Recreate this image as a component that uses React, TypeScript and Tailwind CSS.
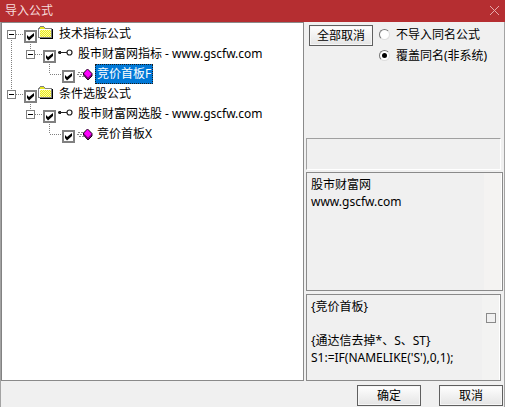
import { useState } from 'react';

type Line = 'none' | 'up' | 'down' | 'both';

type TreeRow = {
  id: string;
  level: 0 | 1 | 2;
  label: string;
  root: Line;
};

const rows: TreeRow[] = [
  { id: 'indicators', level: 0, label: '技术指标公式', root: 'down' },
  { id: 'indicator-group', level: 1, label: '股市财富网指标 - www.gscfw.com', root: 'both' },
  { id: 'indicator-f', level: 2, label: '竞价首板F', root: 'both' },
  { id: 'selectors', level: 0, label: '条件选股公式', root: 'up' },
  { id: 'selector-group', level: 1, label: '股市财富网选股 - www.gscfw.com', root: 'none' },
  { id: 'selector-x', level: 2, label: '竞价首板X', root: 'none' },
];

export default function App() {
  const [selected, setSelected] = useState('indicator-f');

  return (
    <div className="flex min-h-screen flex-col bg-[#f0f0f0] font-['Noto_Sans','Noto_Sans_CJK_SC',sans-serif] text-xs text-black">
      <header className="flex h-[22px] items-center justify-between bg-[#b52e31] pl-[5px] pr-1 text-[#f6dcdc]">
        <h1>导入公式</h1>
        <button aria-label="关闭" className="p-px">
          <svg width="11" height="11" viewBox="0 0 11 11" className="-translate-y-px" stroke="#e6a9aa" fill="none">
            <path d="M1 1l9 9M10 1l-9 9" />
          </svg>
        </button>
      </header>

      <div className="flex grow flex-col border-x border-[#a3a3a3]">
        <main className="flex grow">
          <ul className="grow border border-l-[#828282] border-[#8a8a8a] bg-white pt-px">
            {rows.map((row) => (
              <TreeItem
                key={row.id}
                row={row}
                selected={selected === row.id}
                onSelect={() => setSelected(row.id)}
              />
            ))}
          </ul>

          <section className="flex w-50 shrink-0 flex-col pl-0.5 pr-px">
            <div className="flex h-[116px] items-start gap-1.5 pl-[3px] pt-[3px]">
              <PushButton>全部取消</PushButton>
              <div className="flex flex-col gap-1 pt-px">
                <RadioOption label="不导入同名公式" />
                <RadioOption label="覆盖同名(非系统)" defaultChecked />
              </div>
            </div>

            <div className="mr-0.5 h-8 border border-b-white border-l-[#a0a0a0] border-r-white border-t-[#a0a0a0]" />

            <div className="mt-0.5 flex h-[119px] border border-[#8a8a8a]">
              <TextBox label="来源" value={'股市财富网\nwww.gscfw.com'} />
              <div className="w-[18px] border-r border-white bg-[#f4f3f2]" />
            </div>

            <div className="mr-0.5 mt-[3px] flex h-[87px] border border-[#8a8a8a]">
              <TextBox label="公式源码" value={"{竞价首板}\n\n{通达信去掉*、S、ST}\nS1:=IF(NAMELIKE('S'),0,1);"} />
              <div className="flex w-[18px] flex-col items-center border-r border-white bg-[#f3f3f2] pt-[18px]">
                <input
                  type="checkbox"
                  aria-label="显示全部"
                  className="size-2.5 appearance-none border border-[#8a8a8a] bg-[#f0f0f0]"
                />
              </div>
            </div>
          </section>
        </main>

        <footer className="flex justify-end gap-[18px] px-px pb-px pt-1">
          <PushButton>确定</PushButton>
          <PushButton>取消</PushButton>
        </footer>
      </div>
    </div>
  );
}

function PushButton({ children }: { children: React.ReactNode }) {
  return (
    <button className="h-[21px] w-16 shrink-0 border border-[#5f5f5f] bg-linear-to-b from-white to-[#e4e4e4] leading-4 shadow-[inset_0_0_0_1px_#f6f6f6]">
      {children}
    </button>
  );
}

function RadioOption({ label, defaultChecked }: { label: string; defaultChecked?: boolean }) {
  return (
    <label className="flex h-[17px] items-center gap-1.5">
      <span className="grid size-[11px] place-items-center">
        <input
          type="radio"
          name="duplicate"
          defaultChecked={defaultChecked}
          className="peer col-start-1 row-start-1 size-[11px] appearance-none rounded-full border border-b-[#dedede] border-l-[#777] border-r-[#dedede] border-t-[#777] bg-white"
        />
        <span className="pointer-events-none col-start-1 row-start-1 hidden size-[5px] rounded-full bg-black peer-checked:block" />
      </span>
      <span className="whitespace-nowrap">{label}</span>
    </label>
  );
}

function TextBox({ label, value }: { label: string; value: string }) {
  return (
    <textarea
      readOnly
      aria-label={label}
      defaultValue={value}
      className="min-w-0 grow resize-none overflow-hidden bg-transparent pl-1 pt-[3px] leading-[17px] outline-none"
    />
  );
}

function TreeItem({
  row,
  selected,
  onSelect,
}: {
  row: TreeRow;
  selected: boolean;
  onSelect: () => void;
}) {
  return (
    <li className="flex h-5 items-start">
      {row.level > 0 && <Guide line={row.root} />}
      {row.level > 1 && <Guide line="none" />}
      <Branch line={row.level === 0 ? row.root : 'up'} expander={row.level < 2} />
      <CheckBox label={row.label} />
      <span className="w-5 shrink-0 pl-px pt-0.5">
        {row.level === 0 && <FolderIcon />}
        {row.level === 1 && <KeyIcon />}
        {row.level === 2 && <FormulaIcon />}
      </span>
      <button
        onClick={onSelect}
        className={
          selected
            ? 'h-5 whitespace-nowrap border border-dotted border-[#1c1c1c] bg-[#0078d7] px-px leading-[18px] text-white'
            : 'h-5 whitespace-nowrap px-0.5 leading-5'
        }
      >
        {row.label}
      </button>
    </li>
  );
}

function Guide({ line }: { line: Line }) {
  return (
    <svg width="19" height="20" className="shrink-0" stroke="#808080" strokeDasharray="1 1">
      {line === 'both' && <path d="M9.5 0v20" />}
    </svg>
  );
}

function Branch({ line, expander }: { line: Line; expander: boolean }) {
  return (
    <svg width="22" height="20" className="shrink-0" fill="none" stroke="#808080" shapeRendering="crispEdges">
      <g strokeDasharray="1 1">
        {line === 'up' && <path d="M9.5 0v10" />}
        {line === 'down' && <path d="M9.5 10v10" />}
        <path d="M10 10.5h12" />
      </g>
      {expander && (
        <>
          <rect x="5.5" y="6.5" width="8" height="8" fill="#fff" />
          <path d="M7 10.5h5" stroke="#000" />
        </>
      )}
    </svg>
  );
}

function CheckBox({ label }: { label: string }) {
  return (
    <span className="mt-1.5 grid size-[13px] shrink-0">
      <input
        type="checkbox"
        defaultChecked
        aria-label={label}
        className="peer col-start-1 row-start-1 size-[13px] appearance-none border-2 border-[#808080] bg-white"
      />
      <svg
        width="13"
        height="13"
        className="pointer-events-none invisible col-start-1 row-start-1 peer-checked:visible"
      >
        <path d="M3 5l2 2 5-4v3L5 10.5 3 8z" />
      </svg>
    </span>
  );
}

function FolderIcon() {
  return (
    <svg width="16" height="14" viewBox="0 0 16 14" shapeRendering="crispEdges">
      <path d="M14 3h1v10H2v-1h12z" fill="#000" />
      <path d="M0 2h1V1h1V0h4v1h1v1h7v10H0z" fill="#808080" />
      <path d="M1 3h1V1h4v1h1v1h6v8H1z" fill="#e6e622" />
      <path d="M1 3.5h12M1.5 3v8" stroke="#fff" />
      <path
        d="M2 4.5h11M3 5.5h10M2 6.5h11M3 7.5h10M2 8.5h11M3 9.5h10M2 10.5h11"
        stroke="#ffff9c"
        strokeDasharray="1 1"
      />
    </svg>
  );
}

function KeyIcon() {
  return (
    <svg width="16" height="14" viewBox="0 0 16 14" fill="none" stroke="#222">
      <circle cx="12.5" cy="6.5" r="2.5" strokeWidth="1.2" />
      <path d="M1 6.5h9" />
      <path d="M1 6l1-1h2v3H2L1 7z" fill="#222" stroke="none" />
    </svg>
  );
}

function FormulaIcon() {
  return (
    <svg width="17" height="16" viewBox="0 0 17 16" fill="none">
      <g stroke="#8a8a8a" strokeDasharray="2 1">
        <path d="M2 6.5h5M1 8.5h5M3 10.5h5" />
      </g>
      <path d="M11.5 3L7.500 7v2l4.500 5 4-4V7.500z" fill="#800080" stroke="#200020" />
      <path d="M11.5 3.500L8 7.500l4 4 3.500-3.500z" fill="#f0f" />
    </svg>
  );
}
